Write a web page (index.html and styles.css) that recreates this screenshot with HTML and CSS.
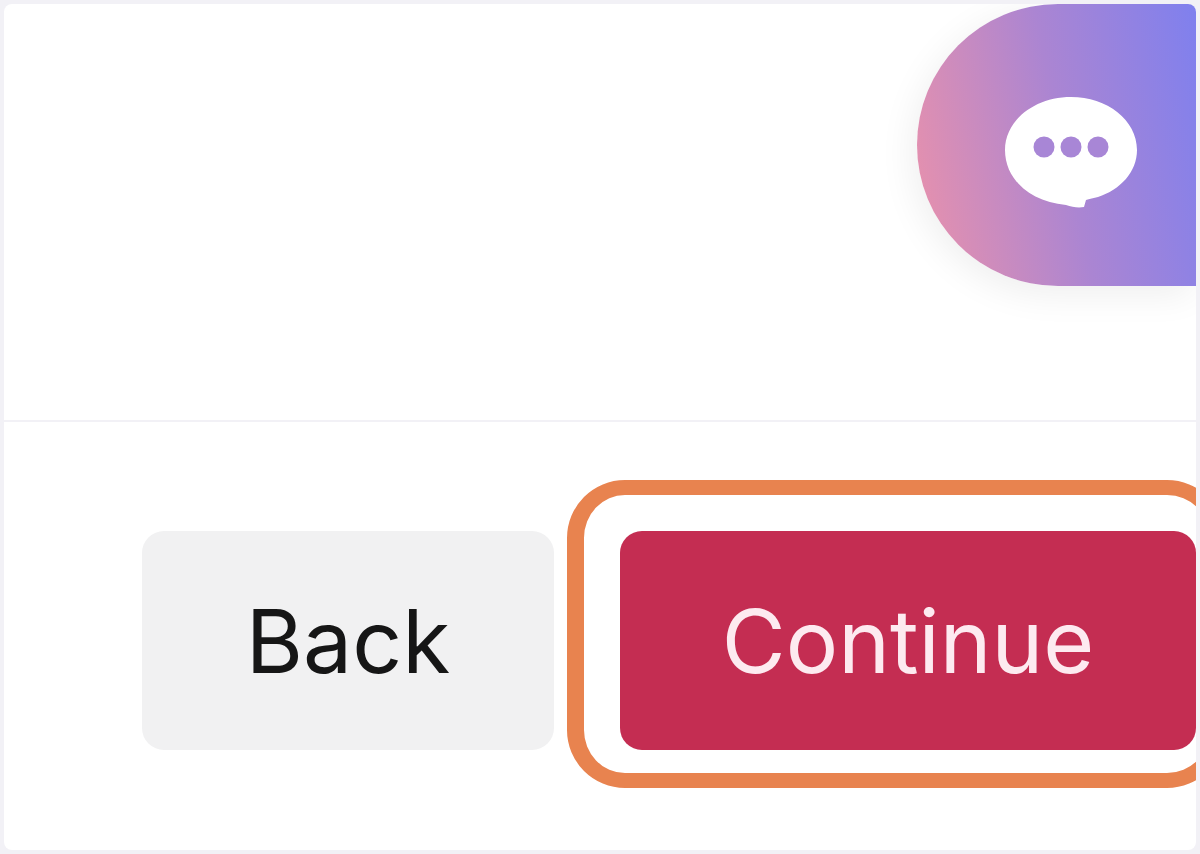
FILE: index.html
```html
<!DOCTYPE html>
<html lang="en">
<head>
  <meta charset="UTF-8">
  <meta name="viewport" content="width=device-width, initial-scale=1.0">
  <title>Continue</title>
  <link rel="stylesheet" href="styles.css">
</head>
<body>
  <div class="card">
    <div class="content">
      <div class="chat-bubble">
        <svg class="chat-icon" viewBox="0 0 132 111" width="132" height="111" aria-hidden="true">
          <path d="M66 0C102 0 132 23 132 53C132 75 115 93 93 100C89 101 84 102 81 103L79 110C73 111 67 110 61 108C26 105 0 83 0 53C0 23 30 0 66 0Z" fill="#fff"/>
          <circle cx="39" cy="50" r="10.5" fill="#a886d6"/>
          <circle cx="66" cy="50" r="10.5" fill="#a886d6"/>
          <circle cx="93" cy="50" r="10.5" fill="#a886d6"/>
        </svg>
      </div>
    </div>
    <div class="footer">
      <button class="btn btn-back">Back</button>
      <div class="continue-wrap">
        <button class="btn btn-continue">Continue</button>
        <div class="highlight"></div>
      </div>
    </div>
  </div>
</body>
</html>
```

FILE: styles.css
```css
* {
  box-sizing: border-box;
}

body {
  margin: 0;
  height: 100vh;
  padding: 4px;
  background-color: #f2f1f6;
  font-family: Inter, "Liberation Sans", sans-serif;
  overflow: hidden;
}

.card {
  display: flex;
  flex-direction: column;
  height: 100%;
  background-color: #fff;
  border-radius: 8px;
  overflow: hidden;
  filter: blur(0.6px);
}

.content {
  display: flex;
  justify-content: flex-end;
  height: 418px;
  border-bottom: 2px solid #f2f1f6;
}

.chat-bubble {
  display: flex;
  align-items: center;
  justify-content: center;
  width: 279px;
  height: 282px;
  padding: 14px 0 0 29px;
  border-radius: 141px 0 0 141px;
  background: linear-gradient(78deg, #e891ac 3%, #ab85d2 52%, #7f80ee 100%);
  box-shadow: -4px 8px 36px rgba(0, 0, 0, 0.07);
}

.footer {
  display: flex;
  justify-content: flex-end;
  gap: 66px;
  padding-top: 109px;
}

.btn {
  display: block;
  height: 219px;
  border: none;
  border-radius: 22px;
  font-family: inherit;
  font-size: 87.5px;
}

.btn-back {
  width: 412px;
  background-color: #f1f1f2;
  color: #161616;
}

.btn-continue {
  width: 576px;
  background-color: #c42d52;
  color: #fdeaf0;
}

.continue-wrap {
  position: relative;
}

/* ring drawn over the button, its right end runs past the card edge */
.highlight {
  position: absolute;
  top: -51px;
  right: -29px;
  bottom: -38px;
  left: -53px;
  border: 15px solid #e8834f;
  border-left-width: 17px;
  border-radius: 58px;
}
```
